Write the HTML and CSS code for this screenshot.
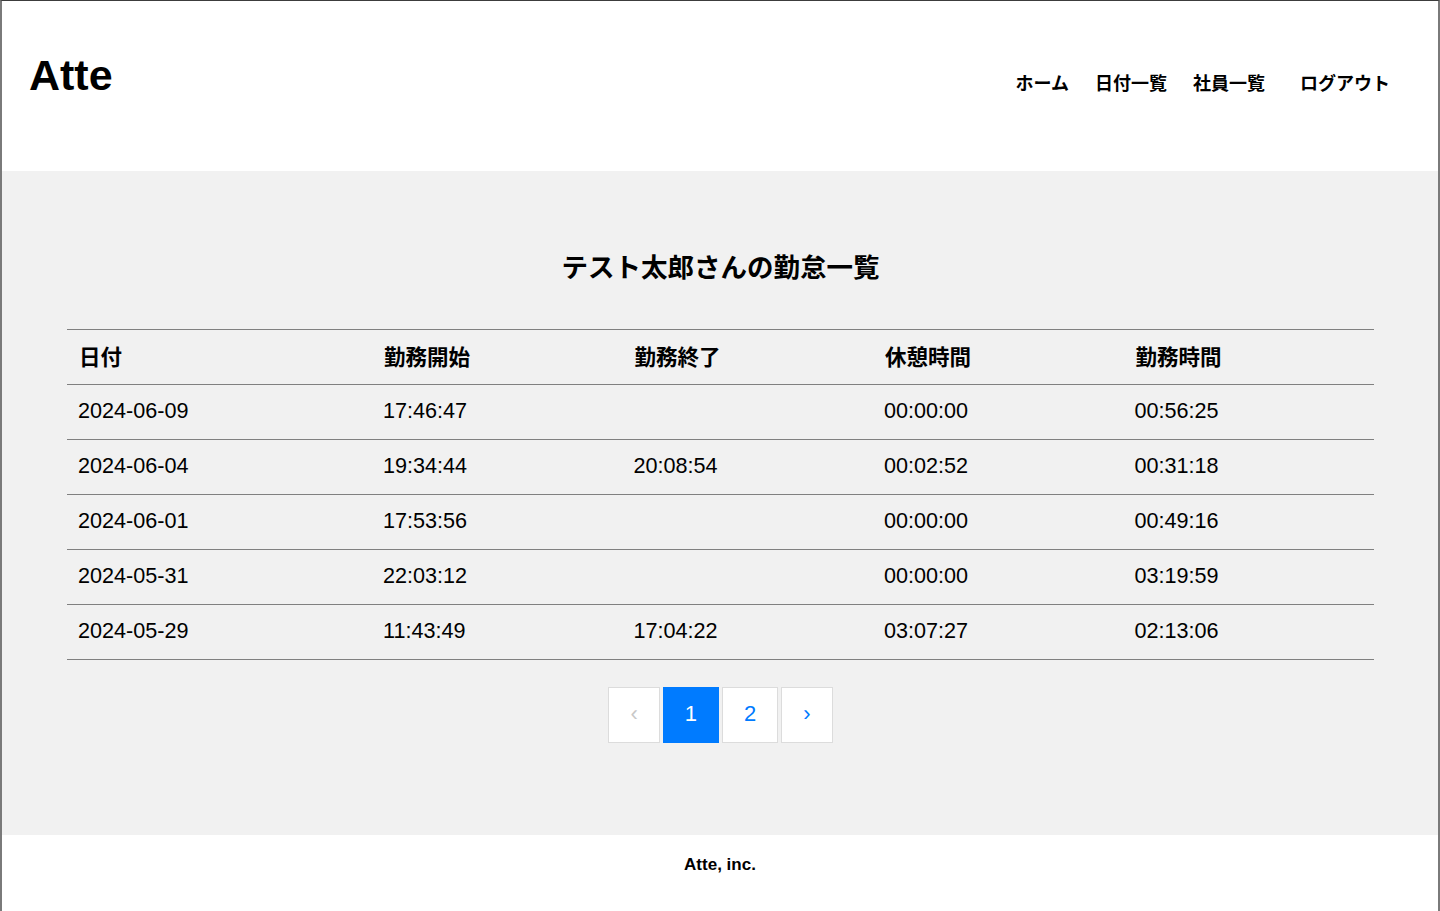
FILE: index.html
```html
<!DOCTYPE html>
<html lang="ja">
<head>
<meta charset="utf-8">
<title>Atte</title>
<link rel="stylesheet" href="styles.css">
</head>
<body>
<header class="header">
  <div class="logo">Atte</div>
  <nav class="nav">
    <a class="nav-link" href="#">ホーム</a>
    <a class="nav-link" href="#">日付一覧</a>
    <a class="nav-link" href="#">社員一覧</a>
    <a class="nav-link nav-logout" href="#">ログアウト</a>
  </nav>
</header>
<main class="main">
  <h2 class="title">テスト太郎さんの勤怠一覧</h2>
  <table class="table">
    <colgroup>
      <col class="col-date">
      <col><col><col><col>
    </colgroup>
    <thead>
      <tr><th>日付</th><th>勤務開始</th><th>勤務終了</th><th>休憩時間</th><th>勤務時間</th></tr>
    </thead>
    <tbody>
      <tr><td>2024-06-09</td><td>17:46:47</td><td></td><td>00:00:00</td><td>00:56:25</td></tr>
      <tr><td>2024-06-04</td><td>19:34:44</td><td>20:08:54</td><td>00:02:52</td><td>00:31:18</td></tr>
      <tr><td>2024-06-01</td><td>17:53:56</td><td></td><td>00:00:00</td><td>00:49:16</td></tr>
      <tr><td>2024-05-31</td><td>22:03:12</td><td></td><td>00:00:00</td><td>03:19:59</td></tr>
      <tr><td>2024-05-29</td><td>11:43:49</td><td>17:04:22</td><td>03:07:27</td><td>02:13:06</td></tr>
    </tbody>
  </table>
  <ul class="pagination">
    <li class="page disabled"><span class="page-link">‹</span></li>
    <li class="page active"><span class="page-link">1</span></li>
    <li class="page"><a class="page-link" href="#">2</a></li>
    <li class="page"><a class="page-link" href="#">›</a></li>
  </ul>
</main>
<footer class="footer">
  <small class="copy">Atte, inc.</small>
</footer>
</body>
</html>
```

FILE: styles.css
```css
* { box-sizing: border-box; }

html, body { margin: 0; padding: 0; }

body {
  font-family: "Liberation Sans", "Noto Sans CJK JP", Arial, sans-serif;
  color: #000;
  background: #fff;
  border-top: 1px solid #3c3c3c;
  border-left: 2px solid #7a7a7a;
  border-right: 2px solid #7a7a7a;
  min-height: 911px;
}

.header {
  height: 170px;
  display: flex;
  align-items: center;
  justify-content: space-between;
  padding: 0 48px 0 27px;
  background: #fff;
}

.logo {
  font-size: 43px;
  font-weight: bold;
  line-height: 1;
  margin-bottom: 22px;
}

.nav {
  display: flex;
  align-items: center;
  margin-bottom: 8px;
}

.nav-link {
  font-family: "Noto Sans CJK JP", sans-serif;
  font-size: 18px;
  font-weight: bold;
  color: #000;
  text-decoration: none;
  margin-left: 26px;
  line-height: 26px;
}

.nav-logout { margin-left: 35px; }

.main {
  background: #f1f1f1;
  padding: 75px 64px 92px 65px;
}

.title {
  margin: 0 0 44px;
  text-align: center;
  font-family: "Noto Sans CJK JP", sans-serif;
  font-size: 26.5px;
  font-weight: bold;
  line-height: 39px;
}

.table {
  width: 100%;
  border-collapse: collapse;
  table-layout: fixed;
}

.col-date { width: 305px; }

.table th,
.table td {
  height: 55px;
  padding: 0 12px 2px;
  text-align: left;
  border-top: 1px solid #808080;
  border-bottom: 1px solid #808080;
  font-size: 21.6px;
  white-space: nowrap;
}

.table th {
  font-family: "Liberation Sans", "Noto Sans CJK JP", sans-serif;
  font-weight: bold;
  font-size: 21.5px;
  padding-bottom: 4px;
}

.table td { font-weight: normal; padding-left: 11px; }

.pagination {
  list-style: none;
  margin: 27px 0 0;
  padding: 0;
  display: flex;
  justify-content: center;
  gap: 3px;
}

.page-link {
  display: flex;
  align-items: center;
  justify-content: center;
  height: 56px;
  padding: 0 21px 3px;
  border: 1px solid #dcdcdc;
  background: #fff;
  color: #007bff;
  font-size: 22px;
  text-decoration: none;
  line-height: 1;
}

.page.disabled .page-link { color: #c8c8c8; }

.page.active .page-link {
  background: #007bff;
  border-color: #007bff;
  color: #fff;
}

.footer {
  background: #fff;
  text-align: center;
  padding: 20px 0 36px;
}

.copy {
  font-size: 17px;
  font-weight: bold;
  line-height: 20px;
}
```
